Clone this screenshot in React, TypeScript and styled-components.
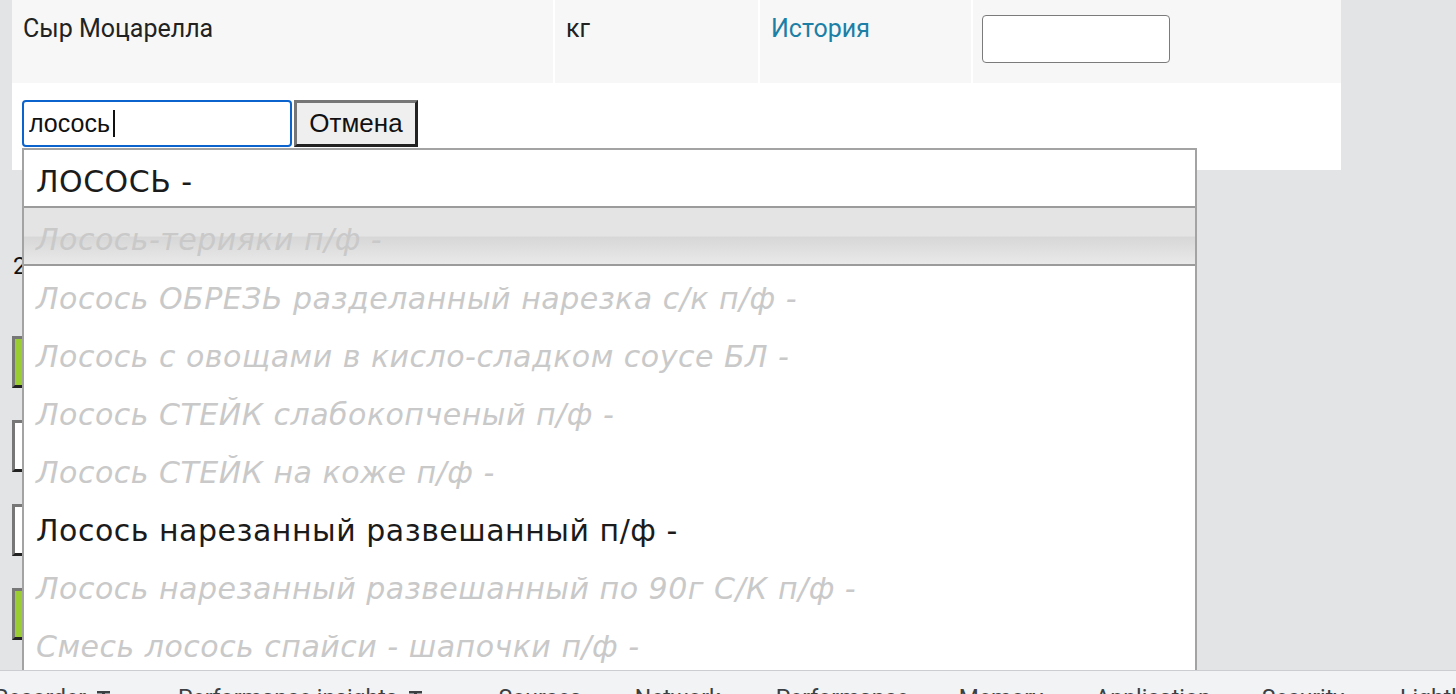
import React from 'react';
import styled, { createGlobalStyle } from 'styled-components';

const Global = createGlobalStyle`
  html, body { margin: 0; padding: 0; }
  body {
    background: #e3e4e6;
    width: 1456px;
    height: 694px;
    overflow: hidden;
    font-family: Roboto, "Liberation Sans", Arial, sans-serif;
  }
`;

const Screen = styled.div`
  display: flex;
  flex-direction: column;
  height: 694px;
`;

const Viewport = styled.div`
  position: relative;
  height: 670px;
  overflow: hidden;
  background: #e3e4e6;
`;

const Panel = styled.div`
  margin-left: 12px;
  width: 1329px;
  height: 170px;
  background: #fff;
  display: flex;
  flex-direction: column;
`;

const Row = styled.div`
  display: grid;
  grid-template-columns: 541px 203px 211px 1fr;
  column-gap: 2px;
  height: 83px;
`;

const Cell = styled.div`
  background: #f7f7f7;
  padding: ${p => (p.$field ? '15px 9px' : '14px 11px 0')};
  font-size: 25px;
  line-height: 30px;
  color: #222;
`;

const HistoryLink = styled.a`
  color: #1b7fa6;
  text-decoration: none;
  cursor: pointer;
`;

const QtyInput = styled.input`
  box-sizing: border-box;
  width: 188px;
  height: 48px;
  border: 1.5px solid #7b7b7b;
  border-radius: 4px;
  background: #fff;
  outline: none;
`;

const EditRow = styled.div`
  display: flex;
  align-items: flex-start;
  padding: 17px 10px 0;
`;

const SearchWrap = styled.div`
  position: relative;
`;

const SearchInput = styled.input`
  box-sizing: border-box;
  width: 270px;
  height: 47px;
  border: 2.5px solid #0b63ce;
  border-radius: 4px;
  padding: 0 5px;
  font-family: "Liberation Sans", Arial, sans-serif;
  font-size: 25px;
  color: #111;
  outline: none;
  caret-color: transparent;
  display: block;
`;

const Caret = styled.span`
  position: absolute;
  left: 91px;
  top: 10px;
  width: 2px;
  height: 27px;
  background: #111;
  pointer-events: none;
`;

const CancelButton = styled.button`
  box-sizing: border-box;
  width: 124px;
  height: 47px;
  margin-left: 2px;
  background: #efefef;
  border: 3px solid;
  border-color: #767676 #222 #222 #767676;
  font-family: "Liberation Sans", Arial, sans-serif;
  font-size: 26px;
  color: #111;
  padding: 0;
`;

const Behind = styled.div`
  margin-left: 12px;
  display: flex;
  flex-direction: column;
  align-items: flex-start;
`;

const Count = styled.div`
  margin-top: 82px;
  font-size: 24px;
  line-height: 28px;
  color: #111;
  padding-left: 1px;
`;

const BigButton = styled.div`
  box-sizing: border-box;
  width: 300px;
  height: 52px;
  margin-top: ${p => p.$mt}px;
  border: 3px solid;
  border-color: #777 #222 #222 #777;
  background: ${p => (p.$green ? '#9acd32' : '#fff')};
`;

const Dropdown = styled.ul`
  position: absolute;
  left: 22px;
  top: 148px;
  width: 1175px;
  box-sizing: border-box;
  margin: 0;
  padding: 0;
  list-style: none;
  background: #fff;
  border: 2px solid #a3a3a3;
  border-bottom: none;
`;

const Option = styled.li`
  box-sizing: border-box;
  height: 58px;
  padding: 6px 12px 0;
  display: flex;
  align-items: center;
  font-family: "DejaVu Sans", Verdana, sans-serif;
  font-size: 30px;
  letter-spacing: 0.5px;
  white-space: nowrap;
  color: ${p => (p.$dim ? '#c9c9c9' : '#1b1b1b')};
  font-style: ${p => (p.$dim ? 'italic' : 'normal')};
  border-bottom: ${p => (p.$divider ? '2px solid #9b9b9b' : 'none')};
  background: ${p =>
    p.$hover
      ? 'linear-gradient(#e4e4e4 0%, #e4e4e4 50%, #d7d7d7 52%, #e9e9e9 100%)'
      : '#fff'};
`;

const DevTools = styled.div`
  height: 23px;
  border-top: 1px solid #cbcdd1;
  background: #f1f3f4;
  display: flex;
  overflow: hidden;
  white-space: nowrap;
`;

const Tab = styled.div`
  display: flex;
  align-items: flex-start;
  gap: 11px;
  padding: 14px 0 0;
  margin-right: ${p => p.$gap}px;
  font-family: Roboto, "Liberation Sans", sans-serif;
  font-size: 23px;
  line-height: 28px;
  color: #3c4043;
  flex-shrink: 0;
  &:first-child { margin-left: -6px; }
`;

const Flask = () => (
  <svg width="13" height="20" viewBox="0 0 13 20" style={{ marginTop: 6 }}>
    <rect x="0" y="0" width="13" height="2.5" fill="#3c4043" />
    <rect x="5" y="0" width="3" height="9" fill="#3c4043" />
    <path d="M5 9 L1 18 H12 L8 9" fill="none" stroke="#3c4043" strokeWidth="2" />
  </svg>
);

const options: { text: string; dim?: boolean; hover?: boolean; divider?: boolean }[] = [
  { text: 'ЛОСОСЬ -', divider: true },
  { text: 'Лосось-терияки п/ф -', dim: true, hover: true, divider: true },
  { text: 'Лосось ОБРЕЗЬ разделанный нарезка с/к п/ф -', dim: true },
  { text: 'Лосось с овощами в кисло-сладком соусе БЛ -', dim: true },
  { text: 'Лосось СТЕЙК слабокопченый п/ф -', dim: true },
  { text: 'Лосось СТЕЙК на коже п/ф -', dim: true },
  { text: 'Лосось нарезанный развешанный п/ф -' },
  { text: 'Лосось нарезанный развешанный по 90г С/К п/ф -', dim: true },
  { text: 'Смесь лосось спайси - шапочки п/ф -', dim: true },
];

const tabs: { label: string; flask?: boolean; gap: number }[] = [
  { label: 'Recorder', flask: true, gap: 68 },
  { label: 'Performance insights', flask: true, gap: 77 },
  { label: 'Sources', gap: 53 },
  { label: 'Network', gap: 55 },
  { label: 'Performance', gap: 50 },
  { label: 'Memory', gap: 52 },
  { label: 'Application', gap: 51 },
  { label: 'Security', gap: 56 },
  { label: 'Lighthouse', gap: 40 },
];

export default function App() {
  return (
    <>
      <Global />
      <Screen>
        <Viewport>
          <Panel>
            <Row>
              <Cell>Сыр Моцарелла</Cell>
              <Cell>кг</Cell>
              <Cell>
                <HistoryLink>История</HistoryLink>
              </Cell>
              <Cell $field>
                <QtyInput type="text" />
              </Cell>
            </Row>
            <EditRow>
              <SearchWrap>
                <SearchInput type="text" defaultValue="лосось" autoFocus />
                <Caret />
              </SearchWrap>
              <CancelButton>Отмена</CancelButton>
            </EditRow>
          </Panel>
          <Behind>
            <Count>2</Count>
            <BigButton $green $mt={56} />
            <BigButton $mt={32} />
            <BigButton $mt={32} />
            <BigButton $green $mt={32} />
          </Behind>
          <Dropdown>
            {options.map(o => (
              <Option key={o.text} $dim={o.dim} $hover={o.hover} $divider={o.divider}>
                {o.text}
              </Option>
            ))}
          </Dropdown>
        </Viewport>
        <DevTools>
          {tabs.map(t => (
            <Tab key={t.label} $gap={t.gap}>
              {t.label}
              {t.flask && <Flask />}
            </Tab>
          ))}
        </DevTools>
      </Screen>
    </>
  );
}
